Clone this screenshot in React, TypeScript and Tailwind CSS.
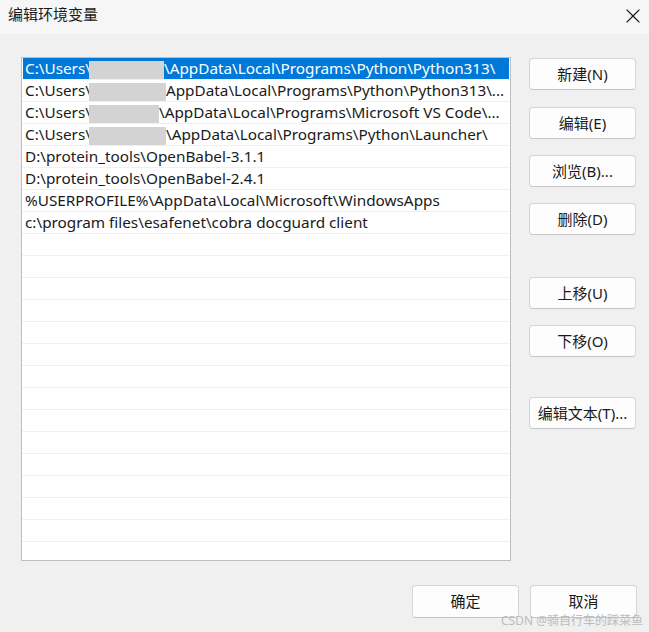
import { X } from "lucide-react";

type Row = { pre?: string; blur?: number; post: string };

const rows: Row[] = [
  { pre: "C:\\Users\\", blur: 75, post: "\\AppData\\Local\\Programs\\Python\\Python313\\" },
  { pre: "C:\\Users\\", blur: 77, post: "AppData\\Local\\Programs\\Python\\Python313\\..." },
  { pre: "C:\\Users\\", blur: 70, post: "\\AppData\\Local\\Programs\\Microsoft VS Code\\..." },
  { pre: "C:\\Users\\", blur: 77, post: "\\AppData\\Local\\Programs\\Python\\Launcher\\" },
  { post: "D:\\protein_tools\\OpenBabel-3.1.1" },
  { post: "D:\\protein_tools\\OpenBabel-2.4.1" },
  { post: "%USERPROFILE%\\AppData\\Local\\Microsoft\\WindowsApps" },
  { post: "c:\\program files\\esafenet\\cobra docguard client" },
];

const font = { fontFamily: '"Noto Sans", "Noto Sans CJK SC", sans-serif' };

const Btn = ({ label, className = "" }: { label: string; className?: string }) => (
  <button
    className={`w-[107px] h-[32px] rounded-[4px] border border-[#d5d5d5] border-b-[#c4c4c4] bg-[#fdfdfd] text-[15px] text-[#1a1a1a] flex items-center justify-center ${className}`}
  >
    {label}
  </button>
);

const App = () => {
  const empty = Array.from({ length: 15 });

  return (
    <div className="relative w-[649px] h-[632px] bg-[#f0f0f0] flex flex-col overflow-hidden" style={font}>
      {/* title bar */}
      <header className="h-[34px] bg-[#f6f6f6] flex items-center justify-between pl-[8px] pr-[4px]">
        <span className="text-[15px] text-[#1a1a1a] -mt-[5px]">编辑环境变量</span>
        <X size={24} strokeWidth={1.1} className="text-[#1a1a1a] -mt-[3px]" />
      </header>

      <div className="flex pl-[21px] pt-[23px] gap-[18px]">
        {/* list */}
        <div className="w-[490px] h-[504px] border border-[#bfbfbf] bg-white overflow-hidden flex flex-col">
          {rows.map((r, i) => (
            <div key={i} className="h-[22px] shrink-0 border-b border-[#f0f0f0] px-px">
              <div
                className={`h-full flex items-center pl-[2px] whitespace-nowrap text-[15.3px] leading-none ${
                  i === 0 ? "bg-[#0078d7] text-white" : "text-[#1a1a1a]"
                }`}
              >
                {r.pre}
                {r.blur && <span className="inline-block h-[18px] bg-[#d3d3d3] mt-[2px] -ml-[2px]" style={{ width: r.blur }} />}
                {r.post}
              </div>
            </div>
          ))}
          {empty.map((_, i) => (
            <div key={i} className="h-[22px] shrink-0 border-b border-[#f0f0f0]" />
          ))}
        </div>

        {/* side buttons */}
        <div className="flex flex-col pt-px">
          <Btn label="新建(N)" />
          <Btn label="编辑(E)" className="mt-[17px]" />
          <Btn label="浏览(B)..." className="mt-[16px]" />
          <Btn label="删除(D)" className="mt-[16px]" />
          <Btn label="上移(U)" className="mt-[42px]" />
          <Btn label="下移(O)" className="mt-[16px]" />
          <Btn label="编辑文本(T)..." className="mt-[40px]" />
        </div>
      </div>

      {/* footer */}
      <div className="flex justify-end gap-[11px] pr-[12px] pt-[24px]">
        <Btn label="确定" className="h-[33px] border-[#6fb0e8] border-b-[#6fb0e8]" />
        <Btn label="取消" className="h-[33px]" />
      </div>

      <span className="absolute right-[6px] bottom-[5px] text-[12px] leading-none text-[#b8b8b8] opacity-90">
        CSDN @骑自行车的踩菜鱼
      </span>
    </div>
  );
};

export default App;
